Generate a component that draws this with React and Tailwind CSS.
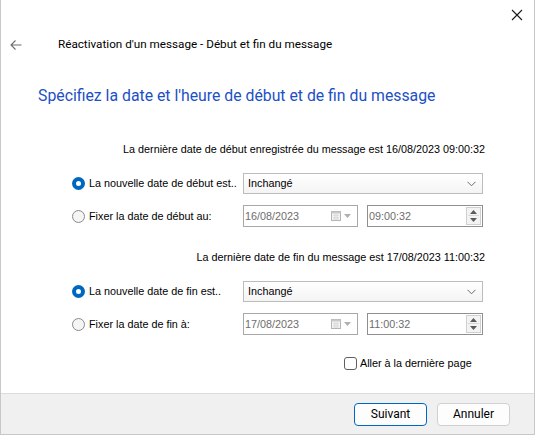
import { useState } from "react";

const ui = { fontFamily: '"Liberation Sans", Arial, sans-serif' };
const head = { fontFamily: 'Roboto, "Noto Sans", sans-serif' };

const Radio = ({ checked, onClick }) => (
  <button
    onClick={onClick}
    className={`w-[13px] h-[13px] rounded-full flex items-center justify-center shrink-0 ${
      checked ? "bg-[#0067c0]" : "border border-[#8a8a8a] bg-[#f5f5f5]"
    }`}
  >
    {checked && <span className="w-[5px] h-[5px] rounded-full bg-white" />}
  </button>
);

const Select = () => (
  <div className="w-[240px] h-[21px] border border-[#bcbcbc] bg-gradient-to-b from-white to-[#f4f4f4] flex items-center justify-between pl-[4px] pr-[6px]">
    <span className="text-[10.8px] text-black">Inchangé</span>
    <svg width="9" height="6" viewBox="0 0 9 6" fill="none">
      <path d="M0.5 0.8 L4.5 4.8 L8.5 0.8" stroke="#6b6b6b" strokeWidth="1" />
    </svg>
  </div>
);

const DateBox = ({ value }) => (
  <div className="w-[115px] h-[22px] border border-[#a8a8a8] bg-white flex items-center justify-between pl-[1px] pr-[6px]">
    <span className="text-[10.8px] text-[#6d6d6d]">{value}</span>
    <div className="flex items-center gap-[3px]">
      <svg width="10" height="10" viewBox="0 0 10 10">
        <rect x="0.5" y="0.5" width="9" height="9" fill="#f3f3f3" stroke="#b5b5b5" />
        <rect x="0.5" y="0.5" width="9" height="2" fill="#c9c9c9" />
        <path d="M2 4.5h6M2 6.5h6M2 8h6M3.5 3v6M5 3v6M6.5 3v6" stroke="#d6d6d6" strokeWidth="0.6" />
      </svg>
      <svg width="7" height="4" viewBox="0 0 7 4">
        <path d="M0 0 L7 0 L3.5 4 Z" fill="#b0b0b0" />
      </svg>
    </div>
  </div>
);

const TimeBox = ({ value }) => (
  <div className="w-[116px] h-[22px] border border-[#8f8f8f] bg-white flex items-center justify-between pl-[1px] pr-[1px]">
    <span className="text-[10.8px] text-[#6d6d6d]">{value}</span>
    <div className="w-[15px] h-[18px] border border-[#d0d0d0] bg-[#f3f3f3] flex flex-col items-center justify-around py-[1px]">
      <svg width="7" height="4" viewBox="0 0 7 4">
        <path d="M0 4 L7 4 L3.5 0 Z" fill="#5a5a5a" />
      </svg>
      <span className="w-[11px] h-px bg-[#d8d8d8]" />
      <svg width="7" height="4" viewBox="0 0 7 4">
        <path d="M0 0 L7 0 L3.5 4 Z" fill="#5a5a5a" />
      </svg>
    </div>
  </div>
);

const Section = ({ info, labelNew, labelFix, date, time }) => {
  const [mode, setMode] = useState("new");
  return (
    <div className="flex flex-col">
      <div className="h-[16px] flex items-center justify-end text-[10.8px] text-black whitespace-nowrap">{info}</div>
      <div className="flex items-center mt-[16px] h-[21px]">
        <div className="w-[171px] flex items-center gap-[4px]">
          <Radio checked={mode === "new"} onClick={() => setMode("new")} />
          <span className="text-[10.8px] text-black whitespace-nowrap">{labelNew}</span>
        </div>
        <Select />
      </div>
      <div className="flex items-center mt-[11px] h-[22px]">
        <div className="w-[171px] flex items-center gap-[4px]">
          <Radio checked={mode === "fix"} onClick={() => setMode("fix")} />
          <span className="text-[10.8px] text-black whitespace-nowrap">{labelFix}</span>
        </div>
        <DateBox value={date} />
        <div className="ml-[9px]">
          <TimeBox value={time} />
        </div>
      </div>
    </div>
  );
};

const App = () => {
  const [lastPage, setLastPage] = useState(false);
  return (
    <div className="w-[535px] h-[435px] bg-white border-x border-b border-[#c8c8c8] flex flex-col" style={ui}>
      <div className="h-[30px] flex justify-end items-center pr-[11px]">
        <svg width="12" height="12" viewBox="0 0 12 12">
          <path d="M1 1 L11 11 M11 1 L1 11" stroke="#1a1a1a" strokeWidth="1.1" />
        </svg>
      </div>
      <div className="h-[30px] flex items-center" style={head}>
        <div className="w-[57px] pl-[9px] flex items-center">
          <svg width="12" height="10" viewBox="0 0 12 10">
            <path d="M11.5 5 H1 M5.5 0.5 L1 5 L5.5 9.5" stroke="#6e6e6e" strokeWidth="1.1" fill="none" />
          </svg>
        </div>
        <span className="text-[11.7px] text-black">Réactivation d'un message - Début et fin du message</span>
      </div>
      <div className="h-[28px] mt-[22px] pl-[37px] flex items-center text-[15.8px] text-[#1c50c4]" style={head}>
        Spécifiez la date et l'heure de début et de fin du message
      </div>
      <div className="ml-[71px] w-[413px] mt-[31px] flex flex-col">
        <Section
          info="La dernière date de début enregistrée du message est 16/08/2023 09:00:32"
          labelNew="La nouvelle date de début est.."
          labelFix="Fixer la date de début au:"
          date="16/08/2023"
          time="09:00:32"
        />
        <div className="mt-[22px]">
          <Section
            info="La dernière date de fin du message est 17/08/2023 11:00:32"
            labelNew="La nouvelle date de fin est.."
            labelFix="Fixer la date de fin à:"
            date="17/08/2023"
            time="11:00:32"
          />
        </div>
        <div className="mt-[21px] pl-[272px] flex items-center gap-[3px] h-[14px]">
          <button
            onClick={() => setLastPage(!lastPage)}
            className="w-[13px] h-[13px] rounded-[3px] border border-[#5f5f5f] bg-white"
          />
          <span className="text-[10.8px] text-black">Aller à la dernière page</span>
        </div>
      </div>
      <div className="mt-auto h-[41px] border-t border-[#dcdcdc] bg-[#f0f0f0] flex items-center justify-end gap-[10px] pr-[24px]" style={head}>
        <button className="w-[73px] h-[23px] rounded-[4px] border border-[#0067c0] bg-[#fdfdfd] text-[12px] text-black">
          Suivant
        </button>
        <button className="w-[73px] h-[23px] rounded-[4px] border border-[#d0d0d0] bg-[#fdfdfd] text-[12px] text-black">
          Annuler
        </button>
      </div>
    </div>
  );
};

export default App;
